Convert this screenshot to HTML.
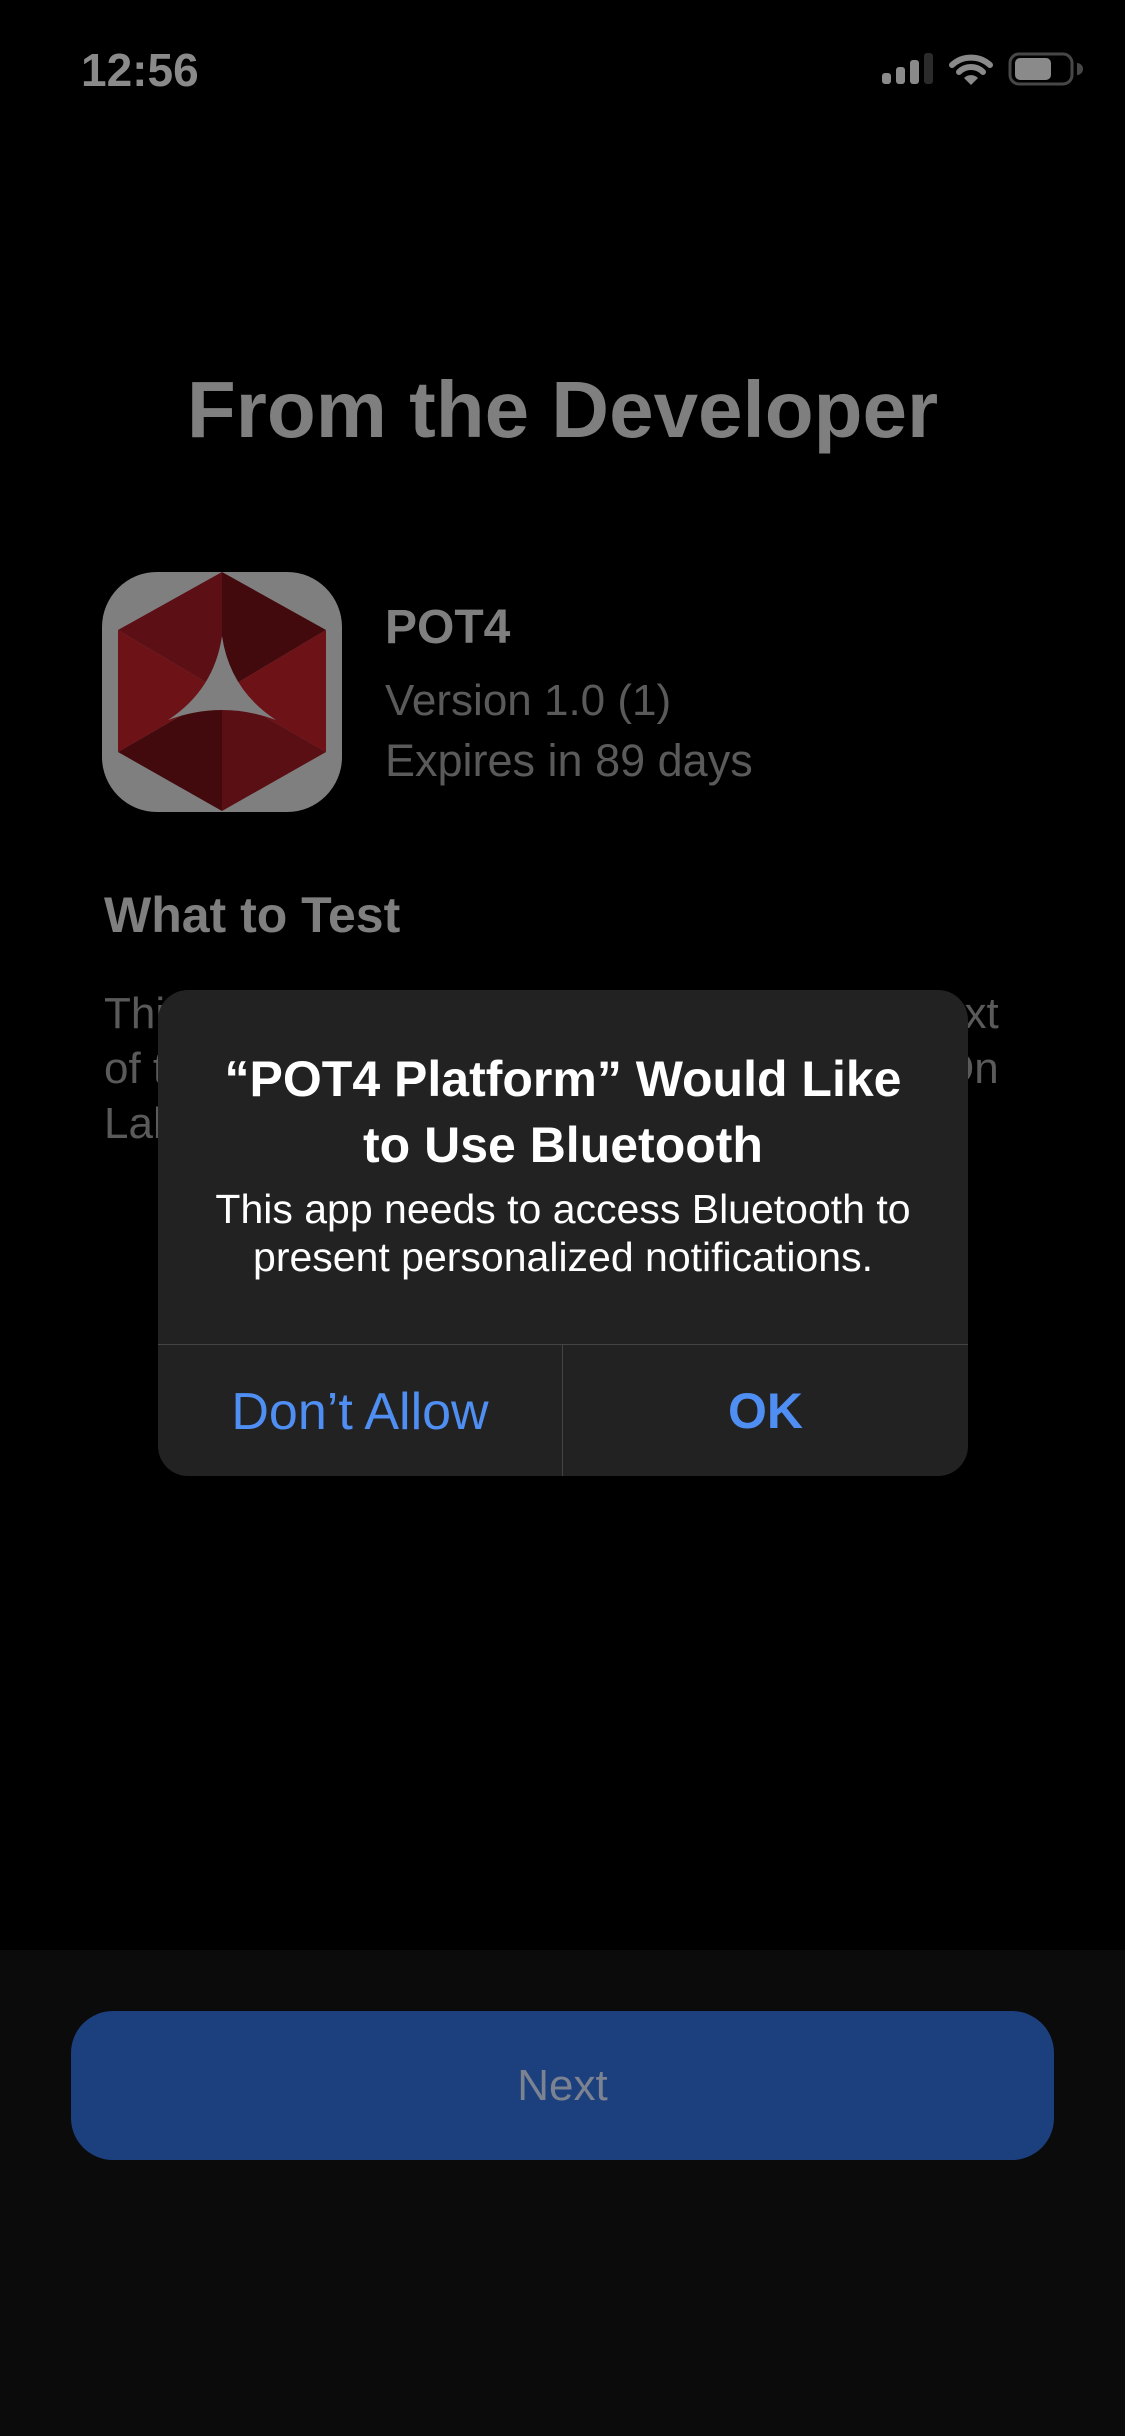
<!DOCTYPE html>
<html><head><meta charset="utf-8"><style>
*{margin:0;padding:0;box-sizing:border-box}
body{width:1125px;height:2436px;background:#000;position:relative;overflow:hidden;font-family:"Liberation Sans",sans-serif}
.a{position:absolute;white-space:nowrap}
</style></head><body>
<div class="a" style="left:81px;top:43px;font-size:46px;color:#8a8a8a;font-weight:bold">12:56</div>
<svg class="a" style="left:0;top:0" width="1125" height="120">
<rect x="882" y="73" width="9" height="11" rx="3" fill="#8a8a8a"/>
<rect x="896" y="67" width="9" height="17" rx="3" fill="#8a8a8a"/>
<rect x="910" y="60" width="9" height="24" rx="3" fill="#8a8a8a"/>
<rect x="924" y="53" width="9" height="31" rx="3" fill="#2b2b2b"/>
<path d="M952 65 A28 28 0 0 1 990 65" stroke="#8a8a8a" stroke-width="6" fill="none" stroke-linecap="round"/>
<path d="M959 72 A17 17 0 0 1 983 72" stroke="#8a8a8a" stroke-width="6" fill="none" stroke-linecap="round"/>
<path d="M964 78 L971 85 L978 78 A10 10 0 0 0 964 78Z" fill="#8a8a8a"/>
<rect x="1010" y="54" width="62" height="30" rx="9" stroke="#474747" stroke-width="3" fill="none"/>
<rect x="1015" y="58" width="36" height="22" rx="5" fill="#8a8a8a"/>
<path d="M1077 63 A6 6 0 0 1 1077 75Z" fill="#474747"/>
</svg>
<div class="a" style="left:0;width:1125px;text-align:center;top:364px;font-size:80px;font-weight:bold;color:#7f7f7f">From the Developer</div>
<svg class="a" style="left:102px;top:572px" width="240" height="240" viewBox="0 0 240 240">
<rect x="0" y="0" width="240" height="240" rx="55" fill="#7f7f7f"/>
<g transform="translate(-102,-572)">
<polygon points="222,572 118,630 222,692" fill="#5c0f15"/>
<polygon points="222,572 326,630 222,692" fill="#430a0e"/>
<polygon points="326,630 326,752 222,692" fill="#6d1217"/>
<polygon points="326,752 222,811 222,692" fill="#5a0f14"/>
<polygon points="222,811 118,752 222,692" fill="#430a0e"/>
<polygon points="118,752 118,630 222,692" fill="#6d1217"/>
<path d="M222 636 Q214 690 168 720 Q222 700 276 720 Q230 690 222 636Z" fill="#7f7f7f"/>
</g>
</svg>
<div class="a" style="left:385px;top:600px;font-size:48px;font-weight:bold;color:#7f7f7f">POT4</div>
<div class="a" style="left:385px;top:676px;font-size:44px;color:#5a5a5a">Version 1.0 (1)</div>
<div class="a" style="left:385px;top:735px;font-size:45px;color:#5a5a5a">Expires in 89 days</div>
<div class="a" style="left:104px;top:886px;font-size:50px;font-weight:bold;color:#7f7f7f">What to Test</div>
<div class="a" style="left:104px;top:986px;font-size:44px;color:#5a5a5a;line-height:55px">This<br>of t<br>Lab</div>
<div class="a" style="left:940px;top:986px;font-size:44px;color:#5a5a5a;line-height:55px">ext<br>On</div>
<div class="a" style="left:158px;top:990px;width:810px;height:486px;background:#222;border-radius:30px">
<div class="a" style="left:0;width:810px;text-align:center;top:56px;font-size:50px;font-weight:bold;color:#fff;line-height:66px">“POT4 Platform” Would Like<br>to Use Bluetooth</div>
<div class="a" style="left:0;width:810px;text-align:center;top:195px;font-size:41px;color:#fff;line-height:48px">This app needs to access Bluetooth to<br>present personalized notifications.</div>
<div class="a" style="left:0;top:354px;width:810px;height:1px;background:#444"></div>
<div class="a" style="left:404px;top:354px;width:1px;height:132px;background:#444"></div>
<div class="a" style="left:0;width:404px;text-align:center;top:392px;font-size:52px;color:#4f8ef2">Don’t Allow</div>
<div class="a" style="left:405px;width:405px;text-align:center;top:392px;font-size:50px;font-weight:bold;color:#4f8ef2">OK</div>
</div>
<div class="a" style="left:0;top:1950px;width:1125px;height:486px;background:#0b0b0b"></div>
<div class="a" style="left:71px;top:2011px;width:983px;height:149px;background:#1c3f7e;border-radius:42px;text-align:center;line-height:149px;font-size:44px;color:#7b8290">Next</div>
</body></html>
